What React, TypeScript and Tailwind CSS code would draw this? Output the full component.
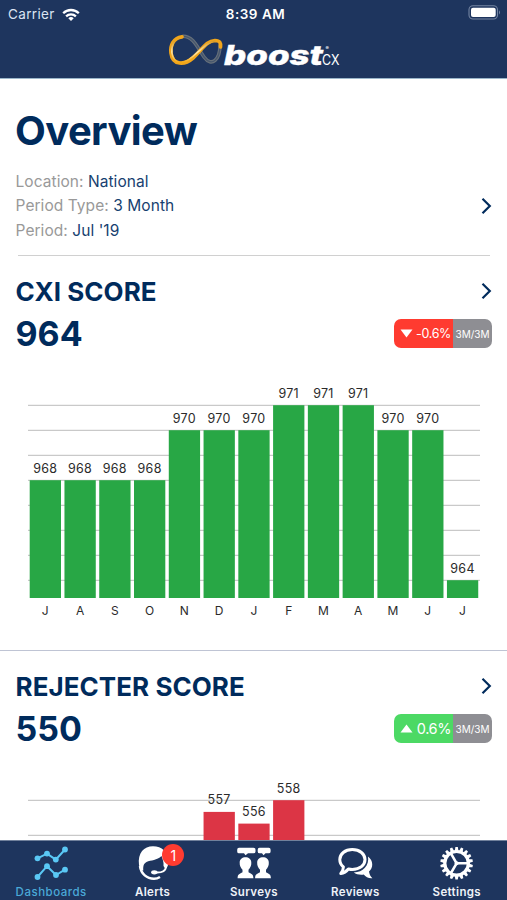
import React from 'react';

type Bar = { label: string; value: number };

const cxiBars: Bar[] = [
  { label: 'J', value: 968 },
  { label: 'A', value: 968 },
  { label: 'S', value: 968 },
  { label: 'O', value: 968 },
  { label: 'N', value: 970 },
  { label: 'D', value: 970 },
  { label: 'J', value: 970 },
  { label: 'F', value: 971 },
  { label: 'M', value: 971 },
  { label: 'A', value: 971 },
  { label: 'M', value: 970 },
  { label: 'J', value: 970 },
  { label: 'J', value: 964 },
];

// Months below the visible range have no bar in view
const rejecterBars: (number | null)[] = [null, null, null, null, null, 557, 556, 558, null, null, null, null, null];

const STEP = 34.77;

const CxiChart: React.FC = () => (
  <svg width="507" height="240" className="block" fontSize="12.5" fill="#2b2b2b" textAnchor="middle">
    {[0, 1, 2, 3, 4, 5, 6, 7].map((i) => (
      <line key={i} x1="28" x2="480" y1={25.3 + i * 25} y2={25.3 + i * 25} stroke="#c9c9c9" strokeWidth="1.3" />
    ))}
    {cxiBars.map((bar, i) => {
      const top = 25.2 + (971 - bar.value) * 25;
      const x = 29.7 + i * STEP;
      return (
        <g key={i}>
          <rect x={x} y={top} width="31.3" height={218 - top} fill="#28a745" />
          <text x={x + 15.6} y={top - 7.5} letterSpacing="0.3">{bar.value}</text>
          <text x={x + 15.6} y="235" fontSize="12">{bar.label}</text>
        </g>
      );
    })}
  </svg>
);

const RejecterChart: React.FC = () => (
  <svg width="507" height="75" className="block" fontSize="12.5" fill="#2b2b2b" textAnchor="middle">
    <line x1="28" x2="480" y1="35.3" y2="35.3" stroke="#c9c9c9" strokeWidth="1.3" />
    <line x1="28" x2="480" y1="70.4" y2="70.4" stroke="#c9c9c9" strokeWidth="1.3" />
    {rejecterBars.map((value, i) => {
      if (value === null) return null;
      const top = 35.2 + (558 - value) * 11.7;
      const x = 29.7 + i * STEP;
      return (
        <g key={i}>
          <rect x={x} y={top} width="31.3" height={75 - top} fill="#dc3545" />
          <text x={x + 15.6} y={top - 7.5} letterSpacing="0.3">{value}</text>
        </g>
      );
    })}
  </svg>
);

const Chevron: React.FC = () => (
  <svg width="12" height="18" viewBox="0 0 12 18" fill="none" stroke="#002b5c" strokeWidth="2.2">
    <path d="M2.5 1.8 L9.8 9 L2.5 16.2" />
  </svg>
);

const Logo: React.FC = () => (
  <svg width="190" height="45" viewBox="0 0 190 45" className="block">
    <defs>
      <linearGradient id="gold" x1="0" y1="0" x2="0" y2="1">
        <stop offset="0" stopColor="#d79a28" />
        <stop offset="0.5" stopColor="#ffe9b0" />
        <stop offset="1" stopColor="#f5a914" />
      </linearGradient>
    </defs>
    <g fill="none" strokeLinecap="round">
      <path d="M23 6.3 C34 6.3 38 19 44 27 C52 38 60 29 60 15" stroke="#66707a" strokeWidth="3.6" />
      <path d="M23 6.3 C34 6.3 38 19 44 27 C52 38 60 29 60 15" stroke="#46566d" strokeWidth="1.3" />
      <path d="M22 6.8 C13 8 10 16 11 23 C12.5 36 25 35 33 28 C42 20 46 11 55 10.5 C60 10.5 61 13 60.5 17" stroke="#f0a51c" strokeWidth="3.7" />
      <path d="M14 12 C9 22 13 33 22 32.5 C33 31.5 43 12 55 11" stroke="url(#gold)" strokeWidth="1.5" />
    </g>
    <text x="64" y="35" fontSize="27" fontWeight="800" fontStyle="italic" fill="#fff" stroke="#fff" strokeWidth="0.4" textLength="99" lengthAdjust="spacingAndGlyphs">boost</text>
    <text x="162" y="34.6" fontSize="14" fill="#fff" textLength="17.5" lengthAdjust="spacingAndGlyphs">CX</text>
    <text x="165.5" y="19.6" fontSize="5" fontWeight="700" fill="#fff">®</text>
  </svg>
);

const StatusBar: React.FC = () => (
  <div className="grid h-7 grid-cols-3 items-center pl-2 pr-1.5 pt-px text-[13.5px] text-white">
    <div className="flex items-center gap-[7px] text-[#dbe4f2]">
      <span className="tracking-[0.35px]">Carrier</span>
      <svg width="18" height="14" viewBox="0 0 18 14" fill="none" stroke="#fff" strokeWidth="2.3">
        <path d="M1.2 5.2 C5.5 0.9 12.5 0.9 16.8 5.2" />
        <path d="M4.1 8.3 C6.8 5.7 11.2 5.7 13.9 8.3" />
        <path d="M6.3 10.2 Q9 8 11.7 10.2 L9 13 Z" fill="#fff" stroke="none" />
      </svg>
    </div>
    <span className="justify-self-center pl-0.5 font-semibold tracking-[0.5px]">8:39 AM</span>
    <svg width="33" height="15" viewBox="0 0 33 15" className="mb-1 justify-self-end">
      <rect x="1" y="0.8" width="28.5" height="13.2" rx="4" fill="none" stroke="#7485a2" strokeWidth="1.1" />
      <rect x="3" y="2.7" width="24.7" height="9.4" rx="2" fill="#fff" />
      <path d="M31 5.2 Q33 7.4 31 9.6 Z" fill="#7485a2" />
    </svg>
  </div>
);

const InfoLine: React.FC<{ name: string; value: string }> = ({ name, value }) => (
  <p className="text-[15.5px] leading-[24.4px] tracking-[0.06px] text-[#999]">
    {name}: <span className="text-[#173f70]">{value}</span>
  </p>
);

const ChangeBadge: React.FC<{ value: string; up?: boolean }> = ({ value, up }) => (
  <div className="flex h-[29px] w-[98px] overflow-hidden rounded-[7px] text-white">
    <div className={`flex w-[59px] shrink-0 items-center justify-between pl-1.5 pr-0.5 ${up ? 'bg-[#4cd964]' : 'bg-[#ff3b30]'}`}>
      <svg width="13" height="9" viewBox="0 0 13 9" fill="#fff">
        {up ? <path d="M0.5 8.5 L6.5 0.5 L12.5 8.5 Z" /> : <path d="M0.5 0.5 L12.5 0.5 L6.5 8.5 Z" />}
      </svg>
      <span className={up ? 'pt-px text-[14.5px] tracking-[-0.4px]' : 'pt-0.5 text-[12.5px] tracking-[-0.35px]'}>{value}</span>
    </div>
    <div className="flex grow items-center justify-center bg-[#8e8e93] pt-[3px] text-[10px] tracking-[-0.05px]">3M/3M</div>
  </div>
);

const ScoreHeader: React.FC<{ title: string; score: number; children: React.ReactNode }> = ({ title, score, children }) => (
  <div className="pl-[15.5px] pr-[15px] text-[#002b5c]">
    <div className="flex h-9 items-center justify-between">
      <h2 className="pt-0.5 text-[26px] font-bold leading-9 tracking-[0.05px]">{title}</h2>
      <Chevron />
    </div>
    <div className="flex h-12 items-center justify-between">
      <span className="pt-px text-[34px] font-bold leading-[48px]">{score}</span>
      {children}
    </div>
  </div>
);

const DashboardsIcon = () => (
  <svg width="40" height="36" viewBox="0 0 40 36" fill="none" stroke="#5ac8f5" strokeWidth="2">
    <path d="M6.5 13.3 L16 8.6 L24.8 14.6 L34 4.5" />
    <path d="M6.5 32 L16 21.2 L25 30 L34 24.7" />
    <g fill="#5ac8f5" stroke="none">
      {[[6.5, 13.3], [16, 8.6], [24.8, 14.6], [34, 4.5], [6.5, 32], [16, 21.2], [25, 30], [34, 24.7]].map(([x, y]) => (
        <circle key={`${x}-${y}`} cx={x} cy={y} r="2.9" />
      ))}
    </g>
  </svg>
);

const AlertsIcon = () => (
  <svg width="40" height="36" viewBox="0 0 40 36">
    <path d="M6 20 C4.5 8 11 1.3 20 1.3 C29 1.3 35 7 35.4 16 C35.5 20 34.5 22.5 32.5 24 L30.5 21 C31 17 29.5 14 28.5 11 C24 15.5 18 15 13.5 17 C10.5 18.5 10 21.5 10.3 25.5 L7.5 25 Z" fill="#fff" />
    <path d="M7 21 C8 29 14 33.7 21 33.7 C23.5 33.7 25 33.2 27 32" fill="none" stroke="#fff" strokeWidth="2.5" />
    <path d="M33 22 C32.5 26.5 29 28 22 27.5" fill="none" stroke="#fff" strokeWidth="2" />
    <ellipse cx="21.3" cy="27.3" rx="3.2" ry="2.1" fill="#fff" />
  </svg>
);

const SurveysIcon = () => (
  <svg width="40" height="36" viewBox="0 0 40 36" fill="#fff">
    <path d="M5 2.8 H19.5 Q21.5 2.8 21.5 4.8 V6.4 Q21.5 8.3 19.5 8.3 H14 L11.5 10.2 L10 8.3 H5 Q3.2 8.3 3.2 6.4 V4.8 Q3.2 2.8 5 2.8 Z" />
    <path d="M25.5 2.8 H34.7 Q36.6 2.8 36.6 4.8 V6.4 Q36.6 8.3 34.7 8.3 H31.5 L29.5 10.2 L28 8.3 H25.5 Q23.7 8.3 23.7 6.4 V4.8 Q23.7 2.8 25.5 2.8 Z" />
    {[11.5, 29].map((x) => (
      <path
        key={x}
        transform={`translate(${x} 0)`}
        d="M-5.8 18 C-6.4 10.2 6.4 10.2 5.8 18 C6 20.5 4.8 22.8 3 24.8 V27.3 C5.5 29 7.8 28.8 7.9 33.2 H-7.9 C-7.8 28.8 -5.5 29 -3 27.3 V24.8 C-4.8 22.8 -6 20.5 -5.8 18 Z"
      />
    ))}
  </svg>
);

const ReviewsIcon = () => (
  <svg width="40" height="36" viewBox="0 0 40 36">
    <path d="M33 11.5 C38.5 15.5 38.5 23 34 26.5 C34.3 29 35.5 31.5 37.4 33.2 C33.5 33.5 30.8 32 28.7 29.6 C25 30.2 21.2 29.3 18.8 27.5 C28 27.2 34.5 20.5 33 11.5 Z" fill="#fff" />
    <path d="M17.3 4.6 C24.8 4.6 30 8.9 30 14.6 C30 20.3 24.8 24.5 17.3 24.5 C15.8 24.5 14.6 24.3 13.4 24 C11.5 26.3 9.2 28 5.8 28.5 C7.5 26.6 8.3 24.6 8.4 22 C6 20.2 4.8 17.6 4.8 14.6 C4.8 8.9 9.9 4.6 17.3 4.6 Z" fill="none" stroke="#fff" strokeWidth="3" strokeLinejoin="round" />
  </svg>
);

const SettingsIcon = () => (
  <svg width="40" height="36" viewBox="0 0 40 36" fill="none" stroke="#fff">
    <circle cx="19.6" cy="18.3" r="11.8" strokeWidth="3.2" />
    {Array.from({ length: 18 }, (_, i) => (
      <path key={i} d="M31.8 16.4 L35.9 17.1 V19.5 L31.8 20.2 Z" fill="#fff" stroke="none" transform={`rotate(${i * 20 + 10} 19.6 18.3)`} />
    ))}
    <path d="M19.6 18.3 H31 M19.6 18.3 L13.9 8.4 M19.6 18.3 L13.9 28.2" strokeWidth="2.6" />
    <circle cx="19.6" cy="18.3" r="2" fill="#fff" stroke="none" />
  </svg>
);

const tabs = [
  { name: 'Dashboards', icon: <DashboardsIcon />, active: true },
  { name: 'Alerts', icon: <AlertsIcon />, badge: 1 },
  { name: 'Surveys', icon: <SurveysIcon /> },
  { name: 'Reviews', icon: <ReviewsIcon /> },
  { name: 'Settings', icon: <SettingsIcon /> },
];

const TabBar: React.FC = () => (
  <nav className="grid h-[60px] shrink-0 grid-cols-5 border-t border-[#71819c] bg-[#1e355e]">
    {tabs.map((tab) => (
      <div key={tab.name} className="relative flex flex-col items-center pl-px pt-1">
        {tab.icon}
        <span className={`mt-[3px] text-[11.5px] leading-4 ${tab.active ? 'font-medium tracking-[0.5px] text-[#4aa9d8]' : 'font-semibold tracking-[0.35px] text-[#eef2f8]'}`}>
          {tab.name}
        </span>
        {tab.badge && (
          <span className="absolute left-[61px] top-[3px] flex h-[22px] w-[22px] items-center justify-center rounded-full bg-[#ff3b30] text-[14px] text-white">
            {tab.badge}
          </span>
        )}
      </div>
    ))}
  </nav>
);

const App: React.FC = () => {
  return (
    <div className="flex h-[900px] w-[507px] flex-col overflow-hidden bg-white font-['Inter',sans-serif]">
      <header className="h-[79px] shrink-0 border-b border-[#9bb6ca] bg-[#1e355e]">
        <StatusBar />
        <div className="flex pl-40 pt-0.5">
          <Logo />
        </div>
      </header>

      <main className="min-h-0 grow overflow-hidden">
        <section className="px-[15px] pt-[27px]">
          <h1 className="text-[40px] font-bold leading-[50px] tracking-[-0.6px] text-[#002b5c]">Overview</h1>
          <div className="mt-[13px] flex items-center justify-between">
            <div className="pl-[0.5px] pt-px">
              <InfoLine name="Location" value="National" />
              <InfoLine name="Period Type" value="3 Month" />
              <InfoLine name="Period" value="Jul '19" />
            </div>
            <Chevron />
          </div>
          <div className="ml-[3px] mr-0.5 mt-3 h-px bg-[#d0d0d0]" />
        </section>

        <section className="border-b border-[#bfc4d4] pb-[30px] pt-[17px]">
          <ScoreHeader title="CXI SCORE" score={964}>
            <ChangeBadge value="-0.6%" />
          </ScoreHeader>
          <div className="pt-[23px]">
            <CxiChart />
          </div>
        </section>

        <section className="pt-[17px]">
          <ScoreHeader title="REJECTER SCORE" score={550}>
            <ChangeBadge value="0.6%" up />
          </ScoreHeader>
          <div className="pt-[13px]">
            <RejecterChart />
          </div>
        </section>
      </main>

      <TabBar />
    </div>
  );
};

export default App;
